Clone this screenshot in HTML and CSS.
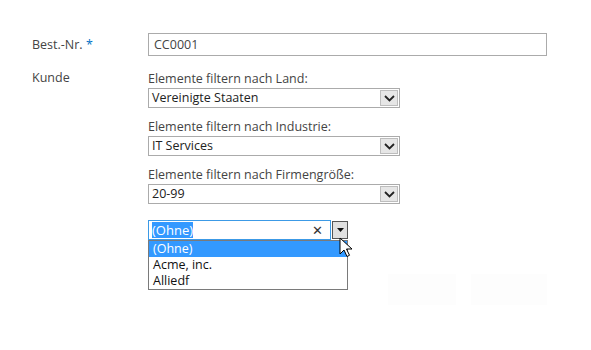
FILE: index.html
```html
<!DOCTYPE html>
<html lang="de">
<head>
    <meta charset="UTF-8">
    <title>Bestellung</title>
    <link rel="stylesheet" href="styles.css">
</head>
<body>
    <div class="form">
        <div class="row">
            <div class="label">Best.-Nr. <span class="req">*</span></div>
            <div class="field">
                <div class="textbox">CC0001</div>
            </div>
        </div>

        <div class="row row-customer">
            <div class="label">Kunde</div>
            <div class="field">
                <div class="filter">
                    <div class="filter-label">Elemente filtern nach Land:</div>
                    <div class="select">
                        <span class="select-value">Vereinigte Staaten</span>
                        <span class="select-btn">
                            <svg width="11" height="7" viewBox="0 0 11 7"><path d="M1 1l4.5 4.5L10 1" fill="none" stroke="#222" stroke-width="1.8"/></svg>
                        </span>
                    </div>
                </div>
                <div class="filter">
                    <div class="filter-label">Elemente filtern nach Industrie:</div>
                    <div class="select">
                        <span class="select-value">IT Services</span>
                        <span class="select-btn">
                            <svg width="11" height="7" viewBox="0 0 11 7"><path d="M1 1l4.5 4.5L10 1" fill="none" stroke="#222" stroke-width="1.8"/></svg>
                        </span>
                    </div>
                </div>
                <div class="filter">
                    <div class="filter-label">Elemente filtern nach Firmengröße:</div>
                    <div class="select">
                        <span class="select-value">20-99</span>
                        <span class="select-btn">
                            <svg width="11" height="7" viewBox="0 0 11 7"><path d="M1 1l4.5 4.5L10 1" fill="none" stroke="#222" stroke-width="1.8"/></svg>
                        </span>
                    </div>
                </div>

                <div class="combo">
                    <div class="combo-top">
                        <div class="combo-input">
                            <span class="combo-sel">(Ohne)</span>
                            <span class="combo-clear">✕</span>
                        </div>
                        <span class="combo-btn">
                            <svg width="7" height="4" viewBox="0 0 7 4"><path d="M0 0h7L3.5 4z" fill="#111"/></svg>
                        </span>
                        <svg class="cursor" width="14" height="21" viewBox="0 0 14 21"><path d="M1 1v16l4-4 3 6.5 2.5-1.2-3-6.3h5.5z" fill="#fff" stroke="#000" stroke-width="1"/></svg>
                    </div>
                    <ul class="combo-list">
                        <li class="active">(Ohne)</li>
                        <li>Acme, inc.</li>
                        <li>Alliedf</li>
                    </ul>
                </div>

                <div class="actions">
                    <span class="ghost-btn btn-ok"></span>
                    <span class="ghost-btn btn-cancel"></span>
                </div>
            </div>
        </div>
    </div>
</body>
</html>
```

FILE: styles.css
```css
body {
    margin: 0;
    background: #fff;
    font-family: 'Open Sans', 'Noto Sans', sans-serif;
    font-size: 12.5px;
    color: #444;
}

.form {
    padding: 33px 0 0 32px;
}

.row {
    display: grid;
    grid-template-columns: 116px 399px;
}

.row-customer {
    margin-top: 14px;
}

.label {
    line-height: 23px;
}

.row-customer .label {
    line-height: 16px;
}

.req {
    color: #0072c6;
}

.textbox {
    height: 21px;
    border: 1px solid #ababab;
    padding: 0 5px;
    line-height: 21px;
    color: #444;
}

.field {
    display: flex;
    flex-direction: column;
}

.filter {
    width: 252px;
    margin-bottom: 10px;
}

.filter-label {
    line-height: 17px;
    margin-bottom: 1px;
}

.select {
    display: flex;
    height: 18px;
    border: 1px solid #ababab;
    color: #222;
}

.select-value {
    flex: 1;
    padding-left: 3px;
    line-height: 18px;
}

.select-btn {
    width: 18px;
    margin: 1px 1px 1px 0;
    background: #e6e6e6;
    border: 1px solid #bdbdbd;
    display: flex;
    align-items: center;
    justify-content: center;
    box-sizing: border-box;
}

.combo {
    width: 200px;
    margin-top: 6px;
}

.combo-top {
    display: flex;
    position: relative;
    height: 20px;
}

.combo-input {
    flex: 1;
    display: flex;
    align-items: center;
    border: 1px solid #3c9ae6;
    padding-left: 3px;
    font-size: 13px;
}

.combo-sel {
    background: #3399ff;
    color: #fff;
    line-height: 16px;
}

.combo-clear {
    margin-left: auto;
    margin-right: 7px;
    color: #333;
    font-size: 13px;
}

.combo-btn {
    width: 16px;
    height: 18px;
    margin: 1px 0 1px 1px;
    box-sizing: border-box;
    border: 1px solid #555;
    background: #e0e0e0;
    display: flex;
    align-items: center;
    justify-content: center;
}

.cursor {
    position: absolute;
    left: 191px;
    top: 17px;
}

.combo-list {
    list-style: none;
    margin: 0;
    padding: 0;
    border: 1px solid #7a7a7a;
    font-size: 12.5px;
    color: #111;
}

.combo-list li {
    height: 16px;
    line-height: 16px;
    padding-left: 4px;
}

.combo-list .active {
    background: #3399ff;
    color: #fff;
}

.actions {
    display: flex;
    justify-content: flex-end;
    gap: 15px;
    margin-top: -16px;
}

.ghost-btn {
    height: 31px;
    background: #fdfdfd;
}

.btn-ok {
    width: 68px;
}

.btn-cancel {
    width: 76px;
}
```
